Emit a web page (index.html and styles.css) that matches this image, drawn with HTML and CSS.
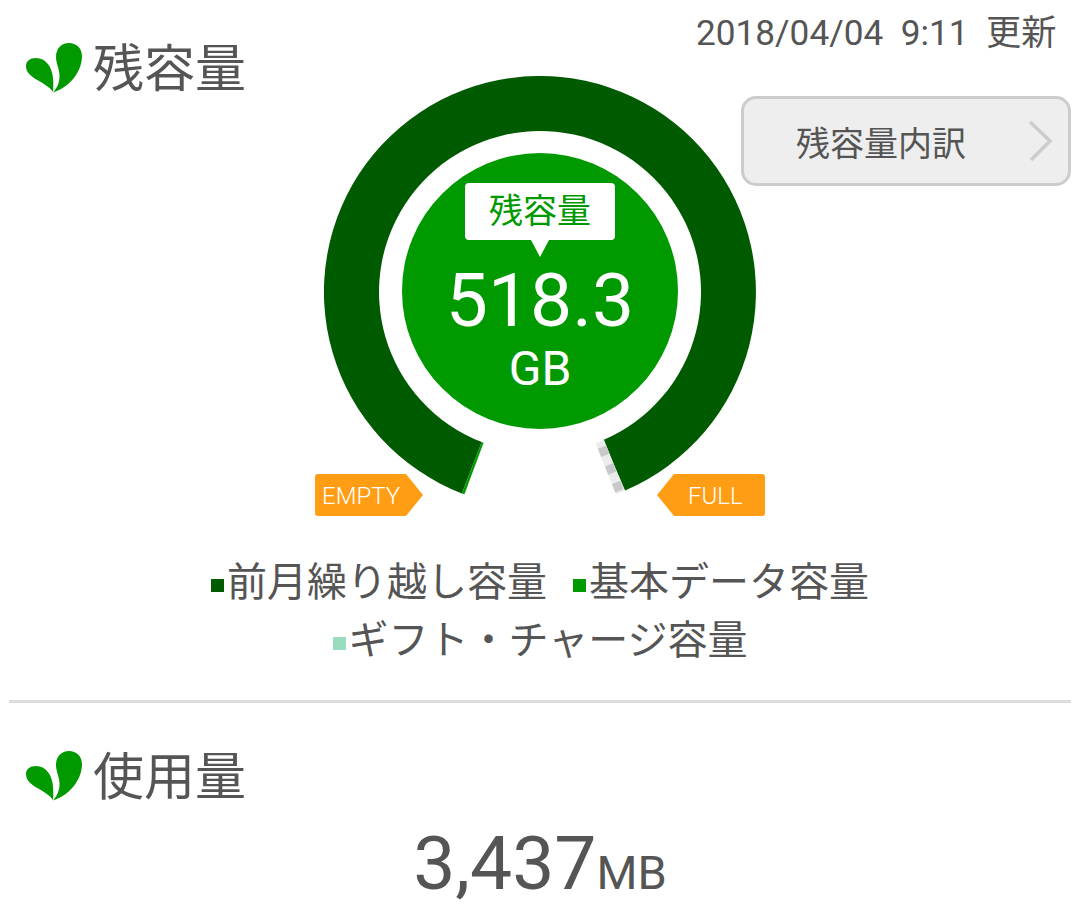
FILE: index.html
```html
<!DOCTYPE html>
<html lang="ja">
<head>
    <meta charset="UTF-8" />
    <meta name="viewport" content="width=device-width, initial-scale=1.0"/>
    <title>残容量</title>
    <link rel="stylesheet" href="styles.css">
</head>
<body>
    <section class="remain">
        <div class="remain-left">
            <h2 class="title">
                <svg class="leaf" viewBox="0 0 57 50"><path d="M27 49C20 38 0 36 0 23C0 18 4 15 10 15C20 15 26 24 27 35C27.400 39 27.400 44 27 49Z"/><path d="M27 49.500C42 45 56 30 56 13C56 5 50 0 43 0C35 0 30 6 30 14C30 20 33 25 33.500 32C33.800 38 32 44 27 49.500Z"/></svg>
                残容量
            </h2>
        </div>
        <div class="gauge">
            <svg class="ring" width="432" height="432" viewBox="0 0 432 432">
                <path fill="#005a00" d="M137.900 417.400A216 216 0 1 1 301.100 414.500L279.400 364A161 161 0 1 0 157.800 366.100Z"/>
                <path fill="#009900" d="M140.400 418.300L137.900 417.400L157.800 366.100L159.600 366.800Z"/>
                <line x1="275.800" y1="365.500" x2="296.200" y2="416.600" stroke="#ececec" stroke-width="9"/>
                <line x1="275.800" y1="365.500" x2="296.200" y2="416.600" stroke="#c9c9c9" stroke-width="9" stroke-dasharray="9 10" stroke-dashoffset="-6"/>
            </svg>
            <div class="core">
                <div class="bubble">残容量</div>
                <div class="amount">518.3</div>
                <div class="unit">GB</div>
            </div>
            <div class="tag tag-empty">EMPTY</div>
            <div class="tag tag-full">FULL</div>
        </div>
        <div class="remain-right">
            <p class="updated">2018/04/04&nbsp; 9:11&nbsp; 更新</p>
            <a class="detail-btn">
                <span>残容量内訳</span>
                <svg class="chevron" width="26" height="42" viewBox="0 0 26 42"><path d="M3 2L23 21L4 40" fill="none" stroke="#ccc" stroke-width="3.500"/></svg>
            </a>
        </div>
    </section>

    <div class="legend">
        <p>
            <span class="legend-item"><i class="dot dot-carry"></i>前月繰り越し容量</span>
            <span class="legend-item"><i class="dot dot-basic"></i>基本データ容量</span>
        </p>
        <p>
            <span class="legend-item"><i class="dot dot-gift"></i>ギフト・チャージ容量</span>
        </p>
    </div>

    <hr class="divider">

    <section class="usage">
        <h2 class="title">
            <svg class="leaf" viewBox="0 0 57 50"><path d="M27 49C20 38 0 36 0 23C0 18 4 15 10 15C20 15 26 24 27 35C27.400 39 27.400 44 27 49Z"/><path d="M27 49.500C42 45 56 30 56 13C56 5 50 0 43 0C35 0 30 6 30 14C30 20 33 25 33.500 32C33.800 38 32 44 27 49.500Z"/></svg>
            使用量
        </h2>
        <p class="usage-value">3,437<small>MB</small></p>
    </section>
</body>
</html>
```

FILE: styles.css
```css
html,
body {
    margin: 0;
    background: #fff;
    color: #555;
    font-family: Roboto, "Noto Sans CJK JP", sans-serif;
}
p {
    margin: 0;
}
.remain {
    display: grid;
    grid-template-columns: minmax(0, 1fr) 432px minmax(0, 1fr);
    height: 516px;
}
.title {
    display: flex;
    align-items: center;
    gap: 10px;
    margin: 0;
    padding-left: 26px;
    font-size: 51px;
    font-weight: 400;
    line-height: 60px;
    white-space: nowrap;
}
.remain-left .title {
    margin-top: 40px;
}
.leaf {
    width: 57px;
    height: 50px;
    margin-bottom: 5px;
    fill: #009900;
    flex: none;
}
.gauge {
    position: relative;
    margin-top: 76px;
}
.ring {
    display: block;
}
.core {
    position: absolute;
    top: 77px;
    left: 78px;
    width: 276px;
    height: 276px;
    border-radius: 50%;
    background: #009900;
    color: #fff;
    display: flex;
    flex-direction: column;
    align-items: center;
}
.bubble {
    position: relative;
    width: 150px;
    height: 57px;
    margin-top: 30px;
    background: #fff;
    border-radius: 4px;
    color: #009900;
    font-size: 34px;
    line-height: 57px;
    text-align: center;
}
.bubble::after {
    content: "";
    position: absolute;
    top: 57px;
    left: 66px;
    border: 9px solid transparent;
    border-top: 17px solid #fff;
    border-bottom: 0;
}
.amount {
    margin-top: 17px;
    font-size: 75px;
    line-height: 86px;
}
.unit {
    font-size: 48px;
    line-height: 52px;
}
.tag {
    position: absolute;
    top: 398px;
    width: 108px;
    height: 42px;
    background: #ff9d14;
    border-radius: 3px;
    color: #fff;
    font-size: 24px;
    font-weight: 300;
    line-height: 45px;
    box-sizing: border-box;
}
.tag-empty {
    left: -9px;
    padding-left: 7px;
    clip-path: polygon(0 0, 91px 0, 108px 21px, 91px 42px, 0 42px);
}
.tag-full {
    right: -9px;
    padding-left: 31px;
    clip-path: polygon(17px 0, 108px 0, 108px 42px, 17px 42px, 0 21px);
}
.remain-right {
    display: flex;
    flex-direction: column;
}
.updated {
    margin: 12px 0 0 -60px;
    padding-right: 24px;
    font-size: 35.200px;
    line-height: 42px;
    text-align: right;
    white-space: nowrap;
}
.detail-btn {
    display: flex;
    align-items: center;
    justify-content: space-between;
    box-sizing: border-box;
    width: 330px;
    height: 90px;
    margin: 42px 0 0 -15px;
    padding: 0 15px 0 52px;
    background: #eee;
    border: 3px solid #ccc;
    border-radius: 15px;
    font-size: 34px;
    white-space: nowrap;
}
.legend {
    margin-top: 38px;
    font-size: 40px;
    line-height: 58px;
    text-align: center;
}
.legend-item {
    margin: 0 8px;
}
.dot {
    display: inline-block;
    width: 13px;
    height: 13px;
    margin: 0 3px 4px 0;
}
.dot-carry { background: #005a00; }
.dot-basic { background: #009900; }
.dot-gift { background: #99ddc0; }
.divider {
    height: 3px;
    margin: 30px 9px 0;
    background: #ddd;
    border: 0;
}
.usage .title {
    margin-top: 45px;
}
.usage-value {
    margin-top: 15px;
    font-size: 75px;
    line-height: 80px;
    text-align: center;
}
.usage-value small {
    font-size: 47px;
}
```
